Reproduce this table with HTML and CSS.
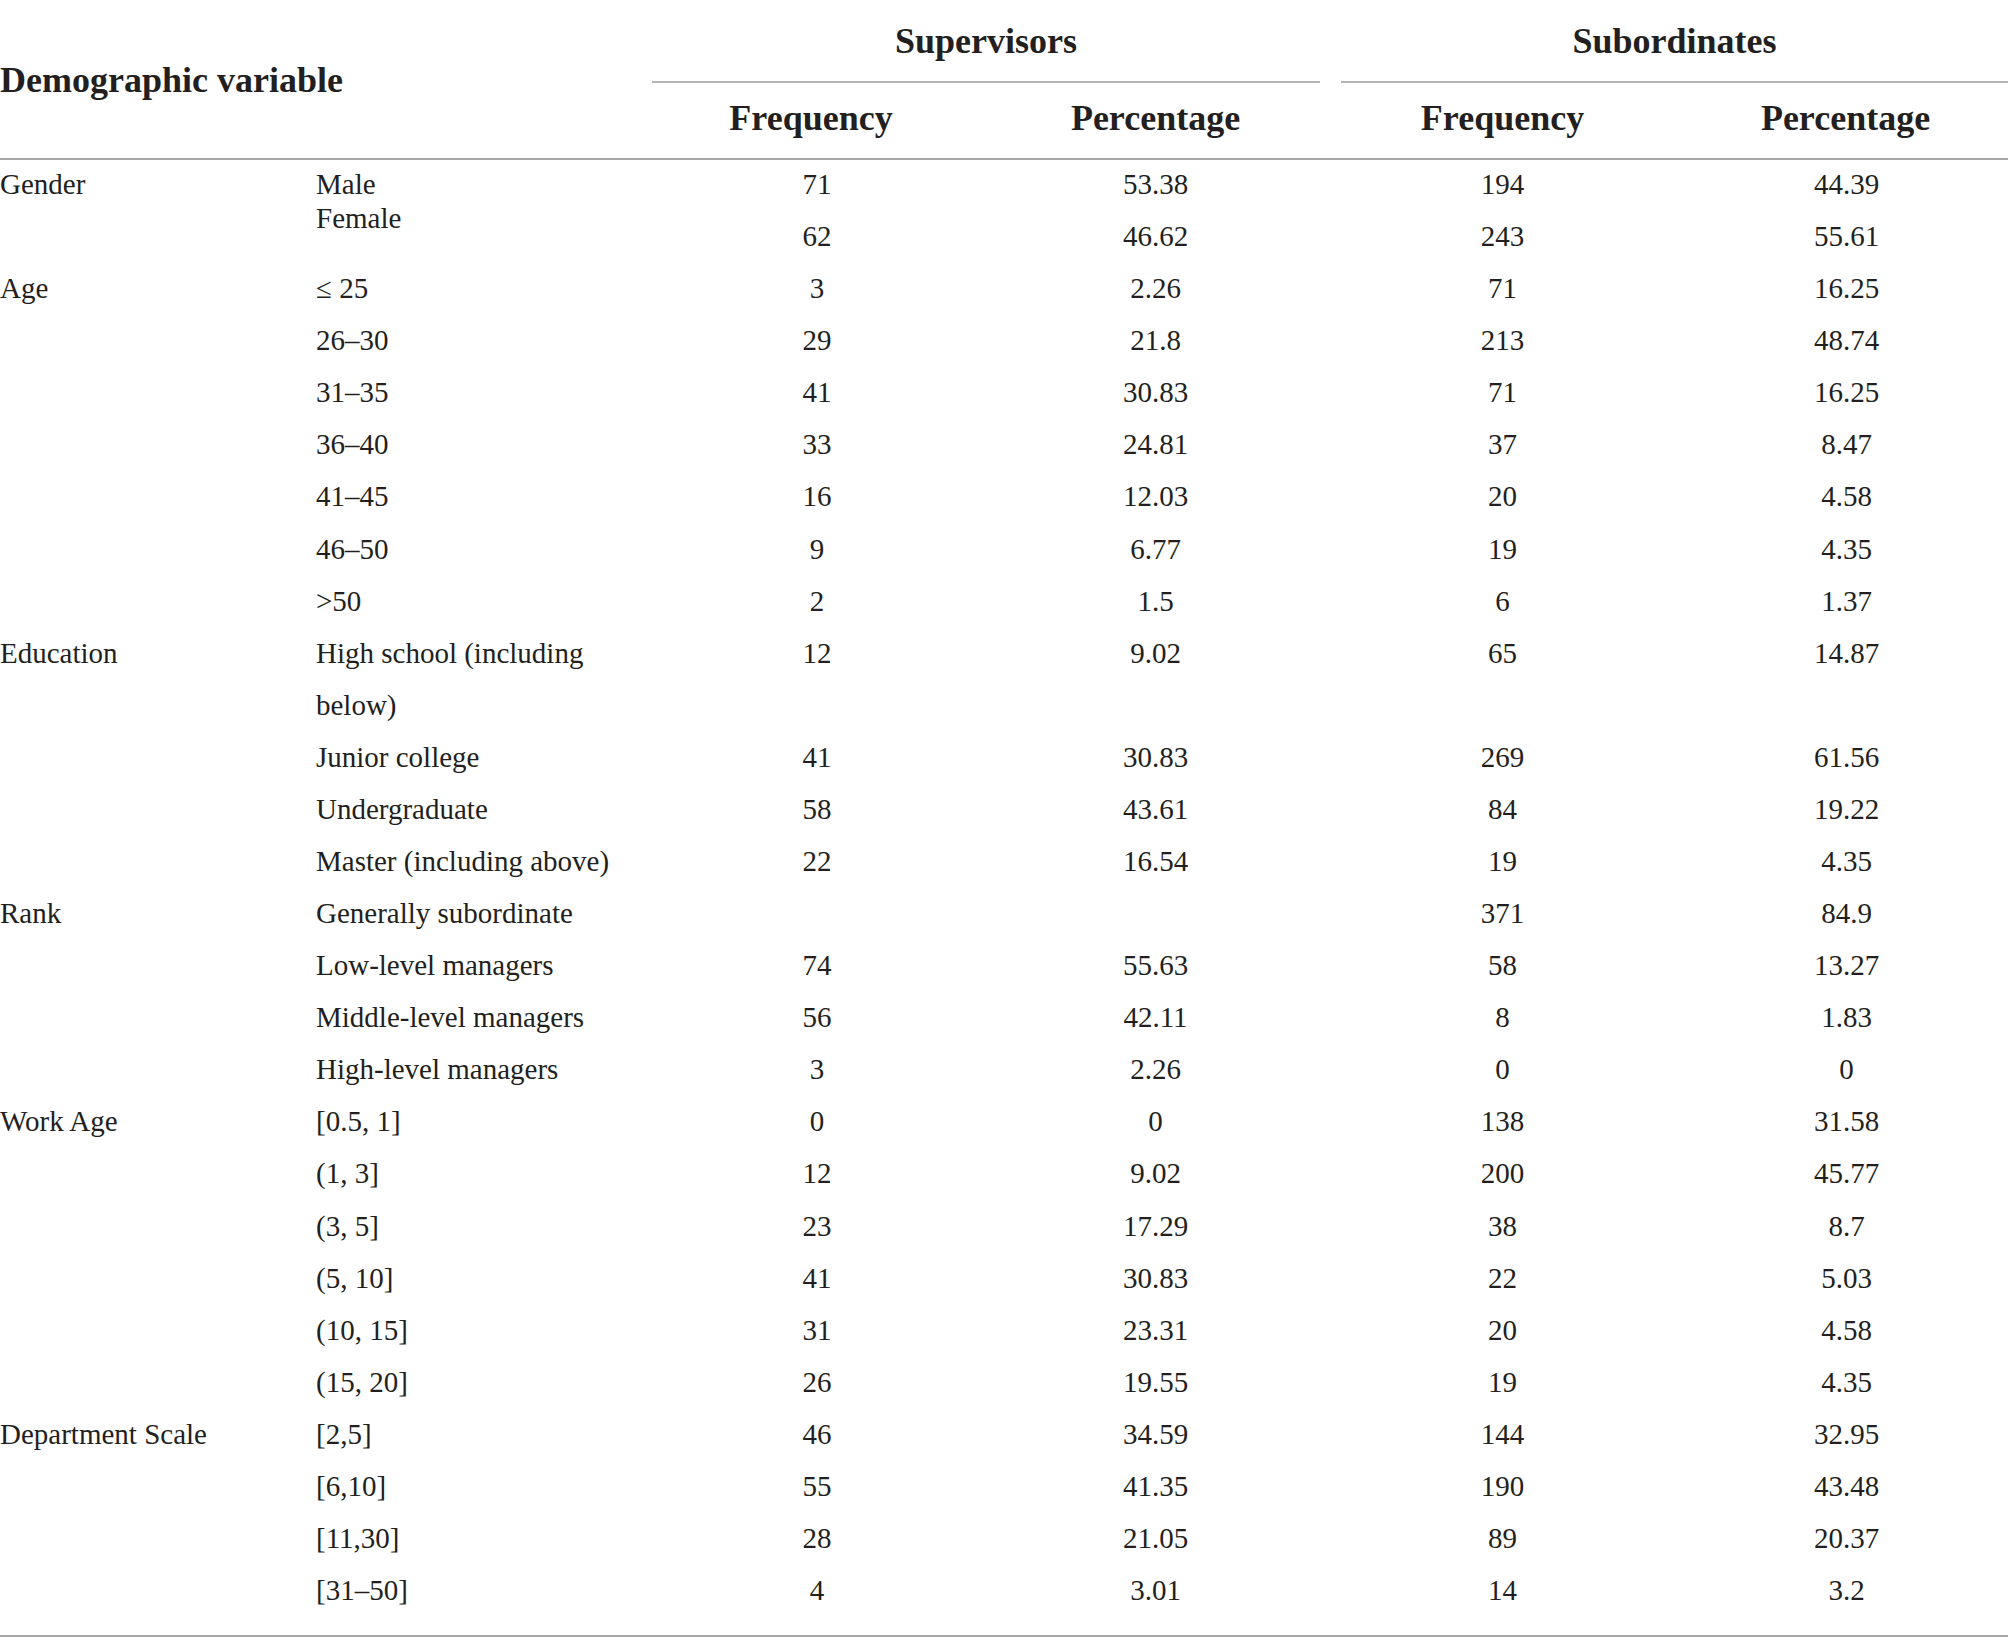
FILE: index.html
```html
<!DOCTYPE html>
<html lang="en">
<head>
<meta charset="utf-8">
<title>Demographic variables</title>
<link rel="stylesheet" href="styles.css">
</head>
<body>
<div class="wrap">
<table class="head">
<colgroup>
<col class="c1"><col class="c2"><col class="c3"><col class="c4"><col class="c5"><col class="c6">
</colgroup>
<tr class="h1">
<th class="dv" colspan="2" rowspan="2">Demographic variable</th>
<th colspan="2" class="grp"><div class="grp-in sup">Supervisors</div></th>
<th colspan="2" class="grp"><div class="grp-in sub">Subordinates</div></th>
</tr>
<tr class="h2">
<th class="first">Frequency</th><th>Percentage</th><th>Frequency</th><th class="last">Percentage</th>
</tr>
</table>
<table class="body">
<colgroup>
<col class="c1"><col class="c2"><col class="c3"><col class="c4"><col class="c5"><col class="c6">
</colgroup>
<tr><td>Gender</td><td><div class="two">Male<br>Female</div></td><td class="n">71</td><td class="n">53.38</td><td class="n">194</td><td class="n last">44.39</td></tr>
<tr><td></td><td></td><td class="n">62</td><td class="n">46.62</td><td class="n">243</td><td class="n last">55.61</td></tr>
<tr><td>Age</td><td>≤ 25</td><td class="n">3</td><td class="n">2.26</td><td class="n">71</td><td class="n last">16.25</td></tr>
<tr><td></td><td>26–30</td><td class="n">29</td><td class="n">21.8</td><td class="n">213</td><td class="n last">48.74</td></tr>
<tr><td></td><td>31–35</td><td class="n">41</td><td class="n">30.83</td><td class="n">71</td><td class="n last">16.25</td></tr>
<tr><td></td><td>36–40</td><td class="n">33</td><td class="n">24.81</td><td class="n">37</td><td class="n last">8.47</td></tr>
<tr><td></td><td>41–45</td><td class="n">16</td><td class="n">12.03</td><td class="n">20</td><td class="n last">4.58</td></tr>
<tr><td></td><td>46–50</td><td class="n">9</td><td class="n">6.77</td><td class="n">19</td><td class="n last">4.35</td></tr>
<tr><td></td><td>&gt;50</td><td class="n">2</td><td class="n">1.5</td><td class="n">6</td><td class="n last">1.37</td></tr>
<tr><td>Education</td><td>High school (including below)</td><td class="n">12</td><td class="n">9.02</td><td class="n">65</td><td class="n last">14.87</td></tr>
<tr><td></td><td>Junior college</td><td class="n">41</td><td class="n">30.83</td><td class="n">269</td><td class="n last">61.56</td></tr>
<tr><td></td><td>Undergraduate</td><td class="n">58</td><td class="n">43.61</td><td class="n">84</td><td class="n last">19.22</td></tr>
<tr><td></td><td>Master (including above)</td><td class="n">22</td><td class="n">16.54</td><td class="n">19</td><td class="n last">4.35</td></tr>
<tr><td>Rank</td><td>Generally subordinate</td><td class="n"></td><td class="n"></td><td class="n">371</td><td class="n last">84.9</td></tr>
<tr><td></td><td>Low-level managers</td><td class="n">74</td><td class="n">55.63</td><td class="n">58</td><td class="n last">13.27</td></tr>
<tr><td></td><td>Middle-level managers</td><td class="n">56</td><td class="n">42.11</td><td class="n">8</td><td class="n last">1.83</td></tr>
<tr><td></td><td>High-level managers</td><td class="n">3</td><td class="n">2.26</td><td class="n">0</td><td class="n last">0</td></tr>
<tr><td>Work Age</td><td>[0.5, 1]</td><td class="n">0</td><td class="n">0</td><td class="n">138</td><td class="n last">31.58</td></tr>
<tr><td></td><td>(1, 3]</td><td class="n">12</td><td class="n">9.02</td><td class="n">200</td><td class="n last">45.77</td></tr>
<tr><td></td><td>(3, 5]</td><td class="n">23</td><td class="n">17.29</td><td class="n">38</td><td class="n last">8.7</td></tr>
<tr><td></td><td>(5, 10]</td><td class="n">41</td><td class="n">30.83</td><td class="n">22</td><td class="n last">5.03</td></tr>
<tr><td></td><td>(10, 15]</td><td class="n">31</td><td class="n">23.31</td><td class="n">20</td><td class="n last">4.58</td></tr>
<tr><td></td><td>(15, 20]</td><td class="n">26</td><td class="n">19.55</td><td class="n">19</td><td class="n last">4.35</td></tr>
<tr><td>Department Scale</td><td>[2,5]</td><td class="n">46</td><td class="n">34.59</td><td class="n">144</td><td class="n last">32.95</td></tr>
<tr><td></td><td>[6,10]</td><td class="n">55</td><td class="n">41.35</td><td class="n">190</td><td class="n last">43.48</td></tr>
<tr><td></td><td>[11,30]</td><td class="n">28</td><td class="n">21.05</td><td class="n">89</td><td class="n last">20.37</td></tr>
<tr><td></td><td>[31–50]</td><td class="n">4</td><td class="n">3.01</td><td class="n">14</td><td class="n last">3.2</td></tr>
</table>
</div>
</body>
</html>
```

FILE: styles.css
```css
html, body {
  margin: 0;
  padding: 0;
  background: #fff;
}
body {
  font-family: "Liberation Serif", "Times New Roman", serif;
  color: #231f20;
  width: 2008px;
  overflow: hidden;
}
.wrap {
  width: 2008px;
  padding-bottom: 19px;
  border-bottom: 2px solid #a8a8a8;
}
table {
  width: 2008px;
  border-collapse: collapse;
  table-layout: fixed;
}
.c1 { width: 316px; }
.c2 { width: 337px; }
.c3 { width: 328px; }
.c4 { width: 349px; }
.c5 { width: 345px; }
.c6 { width: 333px; }

th, td {
  padding: 0;
}
.head {
  border-bottom: 2px solid #a8a8a8;
}
.head th {
  font-size: 36px;
  font-weight: bold;
  text-align: center;
  vertical-align: middle;
}
.head th.dv {
  text-align: left;
  white-space: nowrap;
  padding-top: 1px;
}
.h1 th.grp {
  height: 81px;
  padding: 0;
  vertical-align: top;
}
.grp-in {
  height: 81px;
  line-height: 83px;
  border-bottom: 2px solid #b4b4b4;
}
.grp-in.sup {
  margin-right: 10px;
  margin-left: -1px;
}
.grp-in.sub {
  margin-left: 11px;
}
.h2 th {
  line-height: 71px;
  padding-bottom: 4px;
}
.h2 th.first {
  padding-right: 12px;
}
.h2 th.last {
  padding-left: 8px;
}

.body {
  margin-top: -2px;
}
.body td {
  font-size: 29px;
  line-height: 52.08px;
  vertical-align: top;
  text-align: left;
}
.body td.n {
  text-align: center;
}
.body td.last {
  padding-left: 10px;
}
.two {
  box-sizing: border-box;
  height: 52.08px;
  padding-top: 9px;
  line-height: 34px;
}
```
